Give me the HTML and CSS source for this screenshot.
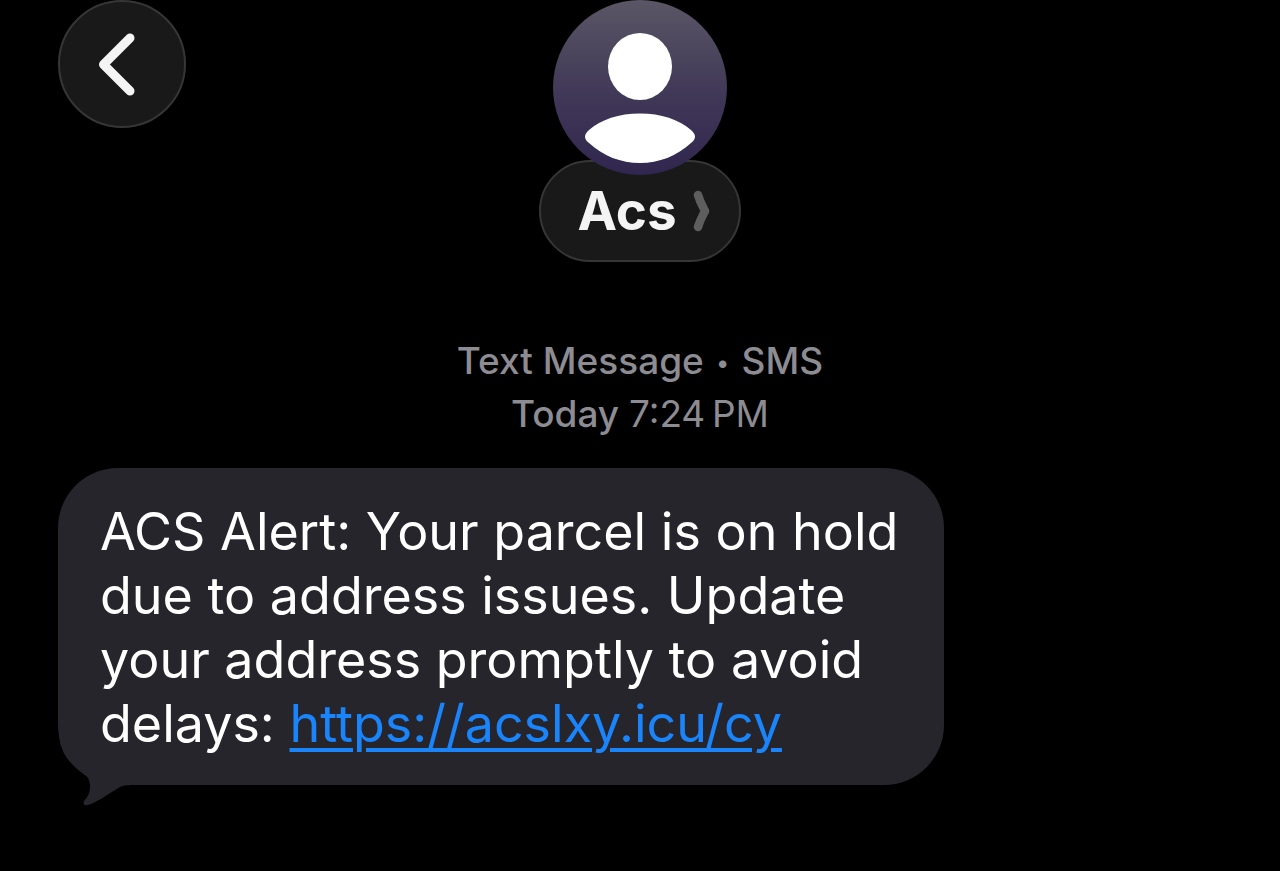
FILE: index.html
```html
<!DOCTYPE html>
<html lang="en">
<head>
    <meta charset="UTF-8">
    <meta name="viewport" content="width=device-width, initial-scale=1.0">
    <title>Messages - Acs</title>
    <link rel="stylesheet" href="styles.css">
</head>
<body>
    <!-- Header -->
    <header class="chat-header">
        <button class="back-button" type="button" aria-label="Back">
            <svg width="128" height="128" viewBox="0 0 128 128" fill="none">
                <path d="M72 38 L45.500 64.500 L72 91" stroke="#f4f4f4" stroke-width="9" stroke-linecap="round" stroke-linejoin="round"/>
            </svg>
        </button>

        <div class="contact">
            <svg class="avatar" width="174" height="175" viewBox="0 0 174 175" aria-hidden="true">
                <defs>
                    <linearGradient id="avatar-fill" x1="0" y1="0" x2="0" y2="1">
                        <stop offset="0" stop-color="#5a5665"/>
                        <stop offset="0.500" stop-color="#423a58"/>
                        <stop offset="1" stop-color="#30264f"/>
                    </linearGradient>
                </defs>
                <ellipse cx="87" cy="87.500" rx="87" ry="87.500" fill="url(#avatar-fill)"/>
                <ellipse cx="87" cy="66.500" rx="32" ry="33.500" fill="#fff"/>
                <path d="M36 130 C48 119.500 66 113.500 87 113.500 C108 113.500 126 119.500 138 130 Q146 137 138 143 C124 156 106 163 87 163 C68 163 50 156 36 143 Q28 137 36 130 Z" fill="#fff"/>
            </svg>
            <button class="contact-name" type="button">
                <span>Acs</span>
                <svg width="18" height="42" viewBox="0 0 18 42" fill="none" aria-hidden="true">
                    <path d="M5 5 C7 12 10 17 12 21 C10 25 7 30 5 37" stroke="#5e5e5e" stroke-width="8.500" stroke-linecap="round" stroke-linejoin="round"/>
                </svg>
            </button>
        </div>
    </header>

    <!-- Conversation -->
    <main class="conversation">
        <div class="message-info">
            <div>Text Message <span class="dot">•</span> SMS</div>
            <div>Today <time>7:24&#8201;PM</time></div>
        </div>

        <div class="bubble">
            <svg class="bubble-tail" width="80" height="70" viewBox="0 0 80 70" aria-hidden="true">
                <path d="M1 0 C3 14 7 21 15 29 C20 34 26 36 30 42 C34 50 32 59 26 65 Q24 70 30 69 C38 67 50 58 62 51 Q65 49 74 49 L40 0 Z" fill="#26252b"/>
            </svg>
            <p>ACS Alert: Your parcel is on hold due to address issues. Update your address promptly to avoid delays: <a href="#">https://acslxy.icu/cy</a></p>
        </div>
    </main>
</body>
</html>
```
FILE: styles.css
```css
body {
    background-color: #000;
    color: #fff;
    font-family: Inter, "Liberation Sans", sans-serif;
    margin: 0;
}

button {
    font-family: inherit;
    padding: 0;
    box-sizing: border-box;
    background: #191919;
    border: 2px solid #363636;
    cursor: pointer;
}

.chat-header {
    display: grid;
    grid-template-columns: 1fr auto 1fr;
    align-items: start;
    padding: 0 58px;
}

.back-button {
    display: flex;
    align-items: center;
    justify-content: center;
    width: 128px;
    height: 128px;
    border-radius: 50%;
}

.back-button svg {
    flex: none;
}

.contact {
    display: flex;
    flex-direction: column;
    align-items: center;
}

.avatar {
    position: relative;
    z-index: 1;
}

.contact-name {
    display: flex;
    align-items: center;
    justify-content: center;
    gap: 16px;
    width: 202px;
    height: 102px;
    margin-top: -15px;
    padding-left: 8px;
    border-radius: 51px;
    color: #f4f4f4;
    font-size: 53px;
    font-weight: 700;
}

.conversation {
    padding: 72px 58px 64px;
}

.message-info {
    color: #8d8c92;
    font-size: 37px;
    font-weight: 500;
    line-height: 53px;
    text-align: center;
}

.message-info time {
    font-weight: 400;
}

.message-info .dot {
    display: inline-block;
    width: 18px;
    font-size: 24px;
    line-height: 24px;
    vertical-align: 3px;
}

.bubble {
    position: relative;
    box-sizing: border-box;
    width: fit-content;
    max-width: 886px;
    margin-top: 28px;
    padding: 32px 42px 29px;
    border-radius: 60px;
    background: #26252b;
}

.bubble p {
    position: relative;
    margin: 0;
    font-size: 52px;
    line-height: 64px;
}

.bubble a {
    color: #1a84fb;
    text-decoration-thickness: 4px;
    text-underline-offset: 6px;
}

/* sits behind the text, hangs below the bubble */
.bubble-tail {
    position: absolute;
    left: 0;
    bottom: -21px;
}
```
